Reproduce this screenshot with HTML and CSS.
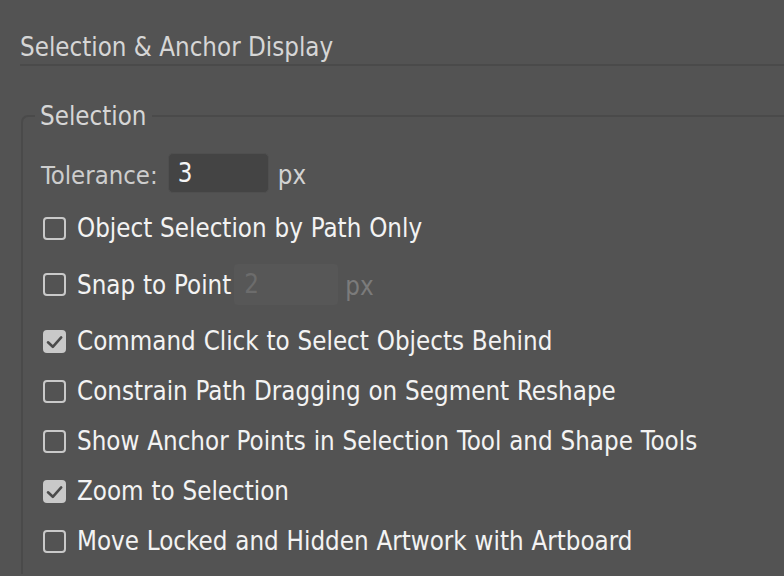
FILE: index.html
```html
<!DOCTYPE html>
<html lang="en">
<head>
<meta charset="utf-8">
<title>Selection &amp; Anchor Display</title>
<link rel="stylesheet" href="styles.css">
</head>
<body>
<div class="panel">
  <h1 class="section-title">Selection &amp; Anchor Display</h1>
  <fieldset class="group">
    <legend class="group-title">Selection</legend>
    <div class="rows">
      <div class="row field-row">
        <span class="field-label">Tolerance:</span>
        <span class="num-input">3</span>
        <span class="unit">px</span>
      </div>
      <div class="row check-row gap-15">
        <span class="box"></span>
        <span class="label">Object Selection by Path Only</span>
      </div>
      <div class="row check-row input-row gap-16">
        <span class="box"></span>
        <span class="label">Snap to Point</span>
        <span class="num-input disabled">2</span>
        <span class="unit disabled">px</span>
      </div>
      <div class="row check-row gap-16">
        <span class="box checked"><svg viewBox="0 0 23 23" width="23" height="23"><path d="M5 12.3 L9.8 16.8 L18.2 7.4" fill="none" stroke="#4b4b4b" stroke-width="2.6" stroke-linecap="round" stroke-linejoin="round"/></svg></span>
        <span class="label">Command Click to Select Objects Behind</span>
      </div>
      <div class="row check-row">
        <span class="box"></span>
        <span class="label">Constrain Path Dragging on Segment Reshape</span>
      </div>
      <div class="row check-row">
        <span class="box"></span>
        <span class="label">Show Anchor Points in Selection Tool and Shape Tools</span>
      </div>
      <div class="row check-row">
        <span class="box checked"><svg viewBox="0 0 23 23" width="23" height="23"><path d="M5 12.3 L9.8 16.8 L18.2 7.4" fill="none" stroke="#4b4b4b" stroke-width="2.6" stroke-linecap="round" stroke-linejoin="round"/></svg></span>
        <span class="label">Zoom to Selection</span>
      </div>
      <div class="row check-row">
        <span class="box"></span>
        <span class="label">Move Locked and Hidden Artwork with Artboard</span>
      </div>
    </div>
  </fieldset>
</div>
</body>
</html>
```
FILE: styles.css
```css
html, body {
  margin: 0;
  padding: 0;
  background: #535353;
  overflow: hidden;
  width: 784px;
  height: 576px;
}

.panel {
  font-family: "DejaVu Sans Condensed", "DejaVu Sans", sans-serif;
  font-stretch: condensed;
  color: #f3f3f3;
}

.section-title {
  margin: 0 0 0 20px;
  padding: 32px 0 2px 0;
  font-size: 25.7px;
  font-weight: normal;
  line-height: 30px;
  color: #d6d6d6;
  border-bottom: 2px solid #4a4a4a;
}

.group {
  margin: 35px 0 0 21px;
  padding: 22px 0 13px 18px;
  border: 2px solid #4a4a4a;
  border-right: none;
  border-bottom: none;
  border-top-left-radius: 7px;
  min-inline-size: 0;
}

.group-title {
  margin-left: -6px;
  padding: 0 5px;
  font-size: 25.7px;
  line-height: 30px;
  color: #d6d6d6;
}

.rows {
  display: flex;
  flex-direction: column;
}

.row {
  display: flex;
  align-items: center;
  height: 40px;
  margin-top: 10px;
}

.field-row {
  margin-top: 0;
}

.gap-15 { margin-top: 15px; }
.gap-16 { margin-top: 16px; }

.input-row { height: 41px; }

.field-label {
  font-size: 25.5px;
  color: #cdcdcd;
  margin-right: 10px;
  position: relative;
  top: 2px;
}

.num-input {
  box-sizing: border-box;
  width: 101px;
  height: 40px;
  padding-left: 9px;
  background: #444444;
  border: 1.5px solid #4f4f4f;
  border-radius: 5px;
  font-size: 25.7px;
  line-height: 38px;
  color: #f5f5f5;
}

.num-input.disabled {
  width: 104px;
  height: 41px;
  margin-left: 3px;
  padding-left: 10px;
  background: #575757;
  border: none;
  border-radius: 4px;
  color: #6c6c6c;
  line-height: 41px;
}

.unit {
  margin-left: 9px;
  font-size: 25.7px;
  color: #d2d2d2;
  position: relative;
  top: 2px;
}

.unit.disabled {
  margin-left: 7px;
  color: #7b7b7b;
  top: 1px;
}

.box {
  box-sizing: border-box;
  flex: none;
  width: 23px;
  height: 23px;
  margin-left: 2px;
  margin-right: 11px;
  border: 2px solid #c9c9c9;
  border-radius: 4px;
  position: relative;
}

.box.checked {
  background: #c9c9c9;
}

.box svg {
  position: absolute;
  left: -2px;
  top: -2px;
}

.label {
  font-size: 25.7px;
  word-spacing: 0.5px;
  white-space: nowrap;
  color: #f3f3f3;
}
```
